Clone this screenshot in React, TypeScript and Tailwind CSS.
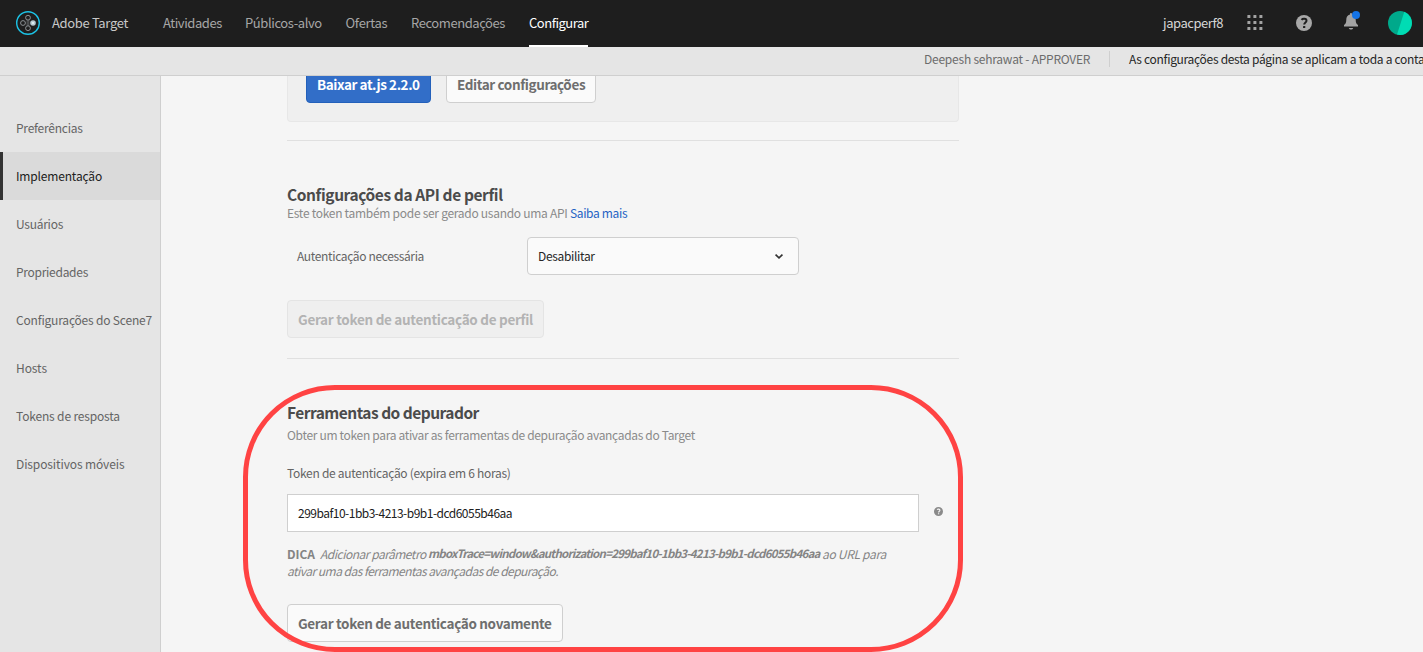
const topNav = [
  { label: "Atividades", cls: "w-[58px] tracking-[-0.44px] text-[#a6a6a6]" },
  { label: "Públicos-alvo", cls: "w-[76.5px] tracking-[-0.4px] text-[#a6a6a6]" },
  { label: "Ofertas", cls: "w-[41.5px] tracking-[-0.3px] text-[#a6a6a6]" },
  { label: "Recomendações", cls: "w-[94px] tracking-[-0.427px] text-[#a6a6a6]" },
  { label: "Configurar", cls: "w-[59px] tracking-[-0.48px] text-white", active: true },
];

const sideNav = [
  { label: "Preferências", cls: "tracking-[-0.24px]" },
  { label: "Implementação", cls: "tracking-[-0.17px]", active: true },
  { label: "Usuários", cls: "tracking-[-0.26px]" },
  { label: "Propriedades", cls: "tracking-[-0.28px]" },
  { label: "Configurações do Scene7", cls: "tracking-[-0.19px]" },
  { label: "Hosts", cls: "tracking-[-0.08px]" },
  { label: "Tokens de resposta", cls: "tracking-[-0.16px]" },
  { label: "Dispositivos móveis", cls: "tracking-[-0.11px]" },
];

function TargetLogo() {
  return (
    <svg width="24" height="24" viewBox="0 0 24 24" fill="none">
      <circle cx="12" cy="12" r="11.3" stroke="#1cc3e6" strokeWidth="1.4" />
      <g stroke="#8c9194" strokeWidth="1">
        <circle cx="12" cy="6.7" r="2.4" />
        <circle cx="7" cy="12" r="2.4" />
        <circle cx="12" cy="17.2" r="2.4" />
        <path d="M11.200 9.200v5.600M12.800 9.200v5.600" strokeWidth=".6" />
      </g>
      <circle cx="17" cy="12" r="2.8" fill="#b9cbd3" />
      <circle cx="17" cy="12" r="1.1" fill="#e8f4f8" />
    </svg>
  );
}

function AppsIcon() {
  return (
    <svg width="16" height="16" viewBox="0 0 16 16" fill="#a3a3a3">
      {[0, 6, 12].map((y) => [0, 6, 12].map((x) => <rect key={`${x}-${y}`} x={x + 0.4} y={y} width="3" height="3" rx=".3" />))}
    </svg>
  );
}

function HelpIcon({ size, bg, fg }: { size: number; bg: string; fg: string }) {
  return (
    <svg width={size} height={size} viewBox="0 0 16 16" fill="none">
      <circle cx="8" cy="8" r="8" fill={bg} />
      <path d="M5.5 4.800C6.600 3.500 10.500 3.300 10.500 5.700c0 1.800-2.300 1.800-2.300 3.900" stroke={fg} strokeWidth="2" />
      <rect x="7" y="10.9" width="2.300" height="2.200" rx=".6" fill={fg} />
    </svg>
  );
}

function BellIcon() {
  return (
    <svg width="18" height="20" viewBox="0 0 18 20">
      <path d="M7 3.600C7 2.400 7.300 2 8 2s1 .4 1 1.600c2.800.7 3.700 2.600 3.700 5.200 0 3.200.9 4.200 2.300 5.200v1.500H1V14c1.400-1 2.300-2 2.300-5.200C3.300 6.200 4.200 4.300 7 3.600Z" fill="#a3a3a3" />
      <path d="M5.800 16.900h4.400c-.4 1.100-1.200 1.500-2.200 1.500s-1.800-.4-2.200-1.500Z" fill="#a3a3a3" />
      <circle cx="13" cy="4" r="4" fill="#1473e6" />
    </svg>
  );
}

function Avatar() {
  return (
    <svg width="24" height="24" viewBox="0 0 24 24">
      <circle cx="12" cy="12" r="12" fill="#00a98b" />
      <path d="M16.300.8A12 12 0 0 1 9 23.600Z" fill="#00dcb4" />
    </svg>
  );
}

function Header() {
  return (
    <header className="flex h-[47px] shrink-0 items-start bg-[#1e1e1e] text-[13px] leading-[45px] whitespace-nowrap">
      <div className="flex h-[46px] w-[163px] shrink-0 items-center pl-4">
        <TargetLogo />
        <span className="ml-3 h-[46px] leading-[45px] tracking-[-0.337px] text-[#c8c8c8]">Adobe Target</span>
      </div>
      <nav className="flex h-[47px] gap-6">
        {topNav.map((n) => (
          <a key={n.label} className={`h-[47px] shrink-0 ${n.cls} ${n.active ? "border-b-2 border-white" : ""}`}>
            {n.label}
          </a>
        ))}
      </nav>
      <div className="ml-auto flex h-[46px] items-center pr-[11px]">
        <span className="h-[46px] w-[84px] leading-[45px] tracking-[-0.445px] text-[#d6d6d6]">japacperf8</span>
        <AppsIcon />
        <div className="ml-[33px]"><HelpIcon size={16} bg="#a8a8a8" fg="#1e1e1e" /></div>
        <div className="mr-[27px] ml-[31px] -mt-[4px]"><BellIcon /></div>
        <Avatar />
      </div>
    </header>
  );
}

export default function App() {
  return (
    <div className="relative flex h-[652px] w-[1423px] flex-col overflow-hidden bg-[#f5f5f5] font-['Noto_Sans_CJK_SC',sans-serif] text-[12px] text-[#646464]">
      <Header />
      <div className="flex h-[29px] shrink-0 items-start justify-start overflow-hidden border-b border-[#cfcfcf] bg-[#e5e5e5] pl-[924px] leading-[24px] whitespace-nowrap">
        <span className="w-[185px] shrink-0 tracking-[-0.23px] text-[#6c6c6c]">Deepesh sehrawat - APPROVER</span>
        <span className="mt-1 h-4 w-px shrink-0 bg-[#cfcfcf]" />
        <span className="ml-[19px] tracking-[-0.3px] text-[#262626]">As configurações desta página se aplicam a toda a conta</span>
      </div>
      <div className="flex min-h-0 flex-1">
        <aside className="w-[161px] shrink-0 border-r border-[#cfcfcf] bg-[#e5e5e5] pt-7">
          {sideNav.map((n) => (
            <a
              key={n.label}
              className={`block h-12 border-l-[3px] pl-[13px] leading-[48px] whitespace-nowrap ${n.cls} ${n.active ? "border-[#323232] bg-[#dadada] text-[#202020]" : "border-transparent"}`}
            >
              {n.label}
            </a>
          ))}
        </aside>
        <main className="ml-[126px] flex w-[672px] flex-col items-start whitespace-nowrap">
          <section className="flex h-[46px] w-full shrink-0 items-start overflow-hidden rounded-b border border-t-0 border-[#e7e7e7] bg-[#efefef] pl-[18px] text-[13.5px] font-bold">
            <button className="-mt-[11px] h-[38px] w-[125px] rounded border border-[#2360ba] bg-[#326ec8] pl-[10px] text-left leading-[36px] tracking-[-0.43px] text-white">Baixar at.js 2.2.0</button>
            <button className="-mt-[11px] ml-[15px] h-[38px] w-[150px] rounded border border-[#cfcfcf] bg-[#fafafa] pl-[10px] text-left leading-[36px] tracking-[-0.39px] text-[#6e6e6e]">Editar configurações</button>
          </section>
          <hr className="mt-[18px] w-full border-[#e0e0e0]" />

          <h2 className="mt-[43px] h-5 text-[15.5px] leading-5 font-bold tracking-[-0.4px] text-[#4b4b4b]">Configurações da API de perfil</h2>
          <p className="h-[18px] leading-[18px] tracking-[-0.285px] text-[#8a8a8a]">
            Este token também pode ser gerado usando uma API <a className="tracking-[-0.34px] text-[#2563c4]">Saiba mais</a>
          </p>
          <div className="mt-[15px] flex h-[38px] items-start leading-[38px]">
            <label className="w-[240px] pl-[10px] tracking-[-0.358px]">Autenticação necessária</label>
            <div className="flex h-[38px] w-[272px] items-center justify-between rounded border border-[#cfcfcf] bg-[#fafafa] pr-[15px] pl-[10px] text-[#262626]">
              <span className="leading-[36px] tracking-[-0.34px]">Desabilitar</span>
              <svg width="8" height="5" viewBox="0 0 8 5" fill="none" stroke="#323232" strokeWidth="1.7"><path d="M.5.6 4 3.800 7.500.6" /></svg>
            </div>
          </div>
          <button className="mt-[25px] h-[38px] w-[257px] rounded border border-[#e4e4e4] bg-[#efefef] pl-[10px] text-left text-[13.5px] leading-[36px] font-bold tracking-[-0.29px] text-[#b3b3b3]">Gerar token de autenticação de perfil</button>
          <hr className="mt-[20px] w-full border-[#e0e0e0]" />

          <h2 className="mt-[43px] h-5 text-[15.5px] leading-5 font-bold tracking-[-0.52px] text-[#4b4b4b]">Ferramentas do depurador</h2>
          <p className="mt-1 h-[18px] leading-[18px] tracking-[-0.325px] text-[#8a8a8a]">Obter um token para ativar as ferramentas de depuração avançadas do Target</p>
          <label className="mt-5 h-[18px] leading-[18px] tracking-[-0.285px]">Token de autenticação (expira em 6 horas)</label>
          <div className="mt-3 flex h-[38px] items-center">
            <div className="h-[38px] w-[632px] border border-[#cfcfcf] bg-white pl-[10px] leading-[36px] tracking-[-0.51px] text-[#202020]">299baf10-1bb3-4213-b9b1-dcd6055b46aa</div>
            <div className="-mt-1 ml-[15px]"><HelpIcon size={9} bg="#8a8a8a" fg="#f5f5f5" /></div>
          </div>
          <div className="mt-[13px] text-[12px] leading-[17px] text-[#848484]">
            <div className="flex h-[17px] italic">
              <b className="w-[33px] tracking-[-0.023px] not-italic">DICA</b>
              <span className="w-[108px] tracking-[-0.5px]">Adicionar parâmetro</span>
              <b className="w-[394px] text-[11.5px] tracking-[-0.75px]">mboxTrace=window&amp;authorization=299baf10-1bb3-4213-b9b1-dcd6055b46aa</b>
              <span className="tracking-[-0.3px]">ao URL para</span>
            </div>
            <div className="h-[17px] tracking-[-0.527px] italic">ativar uma das ferramentas avançadas de depuração.</div>
          </div>
          <button className="mt-[25px] h-[38px] w-[276px] shrink-0 rounded border border-[#cfcfcf] bg-[#fafafa] pl-[10px] text-left text-[13.5px] leading-[36px] font-bold tracking-[-0.325px] text-[#6e6e6e]">Gerar token de autenticação novamente</button>
        </main>
      </div>
      <div className="pointer-events-none absolute top-[385px] left-[243px] h-[267px] w-[720px] rounded-[92px] border-[5px] border-[#ff4343]" />
    </div>
  );
}
